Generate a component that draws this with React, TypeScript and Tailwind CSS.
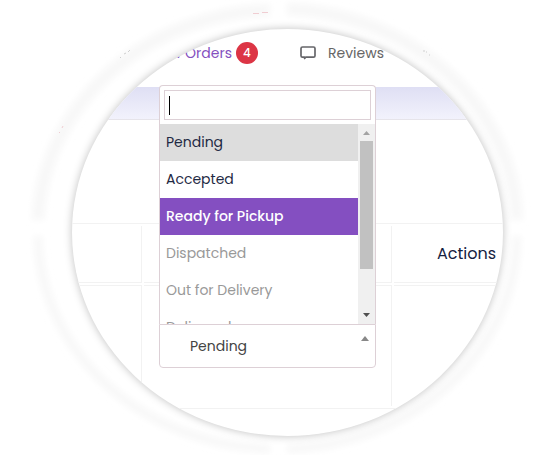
import clsx from "clsx";

const statuses = [
  { label: "Pending", state: "selected" },
  { label: "Accepted", state: "idle" },
  { label: "Ready for Pickup", state: "active" },
  { label: "Dispatched", state: "disabled" },
  { label: "Out for Delivery", state: "disabled" },
  { label: "Delivered", state: "disabled" }
];

function Halo() {
  return (
    <svg
      className="pointer-events-none absolute inset-0 size-full"
      viewBox="0 0 546 455"
      preserveAspectRatio="none"
      aria-hidden="true"
    >
      <defs>
        <filter id="soft" x="-10%" y="-10%" width="120%" height="120%">
          <feGaussianBlur stdDeviation="3" />
        </filter>
      </defs>
      <g fill="none" stroke="#f8f8f8" filter="url(#soft)">
        <path d="M38 220A240 219 0 0 1 270 10" strokeWidth="13" />
        <path d="M287 9A238 219 0 0 1 517 220" strokeWidth="13" />
        <path d="M38 236A240 215 0 0 0 270 449" strokeWidth="9" />
        <path d="M287 449A238 215 0 0 0 517 236" strokeWidth="9" />
      </g>
      <g fill="none" strokeWidth="1">
        <path d="M253 13.500h6M262 12.500h6M59 133l1-1M62 128l1-2" stroke="#f0cdd2" />
        <path d="M120 58l1-1M124 54l2-1M128 52l2-2M423 51h2M426 52h1M429 55h1" stroke="#cfcfcf" />
      </g>
    </svg>
  );
}

function NavBar() {
  return (
    <nav className="flex items-center pt-[13px] pb-[23px] text-sm">
      <a href="#orders" className="flex w-[186px] items-center justify-end gap-1 text-[#8450c0]">
        New Orders
        <span className="flex size-[22px] items-center justify-center rounded-full bg-[#dc3545] text-xs font-medium text-white">
          4
        </span>
      </a>
      <a href="#reviews" className="ml-[42px] flex items-center gap-3 text-[#666]">
        <svg width="16" height="14" viewBox="0 0 16 14" fill="none" stroke="#66666a" strokeWidth="1.7" strokeLinejoin="round">
          <path d="M2.500 1h11a1.500 1.500 0 0 1 1.500 1.500v7.200a1.500 1.500 0 0 1-1.500 1.500H5.800L4.600 12.500v-1.300H2.500A1.500 1.500 0 0 1 1 9.700V2.500A1.500 1.500 0 0 1 2.500 1z" />
        </svg>
        Reviews
      </a>
    </nav>
  );
}

function ScrollTrack() {
  return (
    <div className="flex w-[17px] shrink-0 flex-col items-center bg-[#f0f0f0]" aria-hidden="true">
      <svg width="17" height="17" viewBox="0 0 17 17" className="shrink-0">
        <path d="M5 11h7L8.500 7z" fill="#a3a3a3" />
      </svg>
      <div className="h-32 w-[13px] bg-[#c1c1c1]" />
      <svg width="17" height="17" viewBox="0 0 17 17" className="mt-auto shrink-0">
        <path d="M5 6h7L8.500 10z" fill="#505050" />
      </svg>
    </div>
  );
}

function StatusSelect() {
  return (
    <div className="relative w-[217px]">
      <div className="absolute bottom-full left-0 w-full rounded-t-sm border border-b-0 border-[#ddd0d6] bg-white">
        <div className="relative p-1">
          <input
            type="text"
            aria-label="Search status"
            className="block h-[30px] w-full border border-[#ddd0d6] px-1 text-sm outline-none"
          />
          <span className="absolute top-[10px] left-[9px] h-[19px] w-px bg-black" />
        </div>
        <div className="flex h-[200px]">
          <ul role="listbox" aria-label="Order status" className="grow overflow-hidden text-sm">
            {statuses.map((s) => (
              <li
                key={s.label}
                role="option"
                aria-selected={s.state === "selected"}
                aria-disabled={s.state === "disabled"}
                className={clsx(
                  "flex h-[37px] items-center px-1.5 pb-0.5",
                  s.state === "selected" && "bg-[#ddd] text-[#1f2a44]",
                  s.state === "idle" && "text-[#1f2a44]",
                  s.state === "active" && "bg-[#844fc1] font-medium text-white",
                  s.state === "disabled" && "text-[#999]"
                )}
              >
                {s.label}
              </li>
            ))}
          </ul>
          <ScrollTrack />
        </div>
      </div>
      <button
        type="button"
        aria-haspopup="listbox"
        aria-expanded="true"
        className="flex h-11 w-full items-start justify-between rounded-b-sm border border-[#ddd0d6] bg-white pt-[11px] pr-1.5 pl-[30px] text-sm text-[#444]"
      >
        Pending
        <svg width="8" height="5" viewBox="0 0 8 5" aria-hidden="true">
          <path d="M0 5h8L4 0z" fill="#888" />
        </svg>
      </button>
    </div>
  );
}

function OrdersTable() {
  return (
    <div className="-mx-2 mt-[103px]">
      <table className="w-full table-fixed border-separate border-spacing-[2px] border border-[#f2f2f2] text-left">
        <thead>
          <tr className="h-[57px]">
            <th className="w-[75px] border-r border-b border-[#f2f2f2] p-0" />
            <th className="w-[248px] border-r border-b border-[#f2f2f2] p-0" />
            <th className="border-b border-[#f2f2f2] p-0 pl-[43px] text-base font-normal text-[#15213f]">
              Actions
            </th>
          </tr>
        </thead>
        <tbody>
          <tr className="h-[121px] align-top">
            <td className="border-t border-r border-[#f2f2f2] p-0" />
            <td className="border-t border-r border-[#f2f2f2] p-0 pt-[38px] pl-[15px]">
              <StatusSelect />
            </td>
            <td className="border-t border-[#f2f2f2] p-0" />
          </tr>
        </tbody>
      </table>
    </div>
  );
}

export default function App() {
  return (
    <main className="relative bg-white pt-[29px] pr-[43px] pb-[19px] pl-[72px] font-['Poppins','Inter',sans-serif]">
      <Halo />
      <div className="relative overflow-hidden rounded-[50%] bg-white pb-[27px] shadow-[0_0_8px_0_rgba(0,0,0,0.25)]">
        <NavBar />
        <div className="h-[33px] border-b border-[#e6e4ea] bg-linear-to-b from-[#dfdff4] to-[#f2f2fc]" />
        <OrdersTable />
      </div>
    </main>
  );
}
